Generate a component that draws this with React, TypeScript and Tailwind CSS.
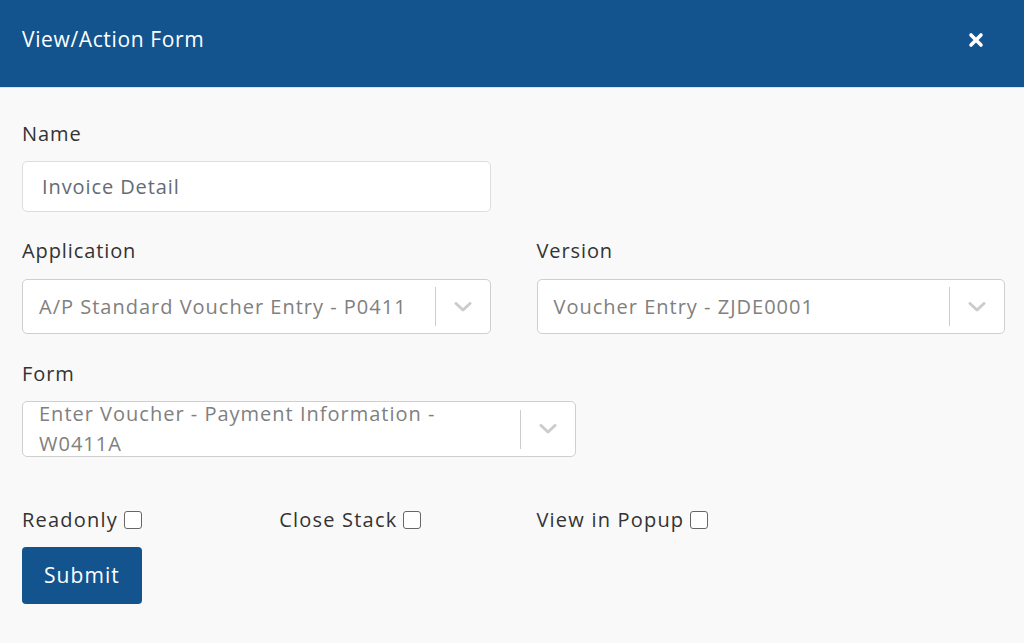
import React from "react";

const font = { fontFamily: '"Open Sans", "Liberation Sans", sans-serif' };

const Chevron = () => (
  <svg width="18" height="10" viewBox="0 0 18 10" fill="none">
    <path d="M2 1.5 L9 8 L16 1.5" stroke="#cccccc" strokeWidth="3" strokeLinecap="round" strokeLinejoin="round" />
  </svg>
);

const SelectBox = ({ value, className = "" }: { value: string; className?: string }) => (
  <div className={`flex h-[55px] items-center rounded-[5px] border border-[#cfcfcf] bg-white ${className}`}>
    <div className="flex-1 pl-[16px] pr-2 text-[20px] leading-[30px] tracking-[0.05em] text-[#808080]">{value}</div>
    <div className="h-[39px] w-px bg-[#cccccc]" />
    <div className="flex w-[54px] items-center justify-center">
      <Chevron />
    </div>
  </div>
);

const Check = ({ label }: { label: string }) => (
  <label className="flex items-center text-[20px] leading-[28px] tracking-[0.06em] text-[#333]">
    {label}
    <span className="ml-[6px] inline-block h-[18px] w-[18px] rounded-[3px] border border-[#666] bg-white" />
  </label>
);

const Label = ({ children }: { children: React.ReactNode }) => (
  <div className="text-[20px] leading-[28px] tracking-[0.045em] text-[#333]">{children}</div>
);

export default function App() {
  return (
    <div className="min-h-[643px] w-full bg-[#f9f9f9]" style={font}>
      {/* modal header */}
      <div className="flex h-[88px] items-center justify-between border-b border-[#dde1e6] bg-[#13548f] pl-[22px] pr-[40px] pb-[7px]">
        <h1 className="text-[21px] font-medium tracking-[0.03em] text-white">View/Action Form</h1>
        <svg width="16" height="16" viewBox="0 0 16 16">
          <path d="M3 3 L13 13 M13 3 L3 13" stroke="white" strokeWidth="3.6" strokeLinecap="round" />
        </svg>
      </div>

      <div className="px-[22px] pr-[19px] pt-[32px]">
        <div className="grid grid-cols-12 gap-x-[46px]">
          <div className="col-span-6">
            <Label>Name</Label>
            <div className="mt-[13px] flex h-[51px] items-center rounded-[5px] border border-[#dedede] bg-white pl-[19px] text-[20px] tracking-[0.045em] text-[#646b74]">
              Invoice Detail
            </div>
          </div>
          <div className="col-span-6" />

          <div className="col-span-6 mt-[25px]">
            <Label>Application</Label>
            <SelectBox className="mt-[14px]" value="A/P Standard Voucher Entry - P0411" />
          </div>
          <div className="col-span-6 mt-[25px]">
            <Label>Version</Label>
            <SelectBox className="mt-[14px]" value="Voucher Entry - ZJDE0001" />
          </div>

          <div className="col-span-7 mt-[26px]">
            <Label>Form</Label>
            <SelectBox className="mt-[13px] h-[56px]" value="Enter Voucher - Payment Information - W0411A" />
          </div>
          <div className="col-span-5" />

          <div className="col-span-3 mt-[49px]">
            <Check label="Readonly" />
          </div>
          <div className="col-span-3 mt-[49px]">
            <Check label="Close Stack" />
          </div>
          <div className="col-span-3 mt-[49px]">
            <Check label="View in Popup" />
          </div>
          <div className="col-span-3" />
        </div>

        <button className="mt-[13px] h-[57px] rounded-[4px] bg-[#13548f] px-[22px] text-[21px] tracking-[0.05em] text-white">
          Submit
        </button>
      </div>
    </div>
  );
}
